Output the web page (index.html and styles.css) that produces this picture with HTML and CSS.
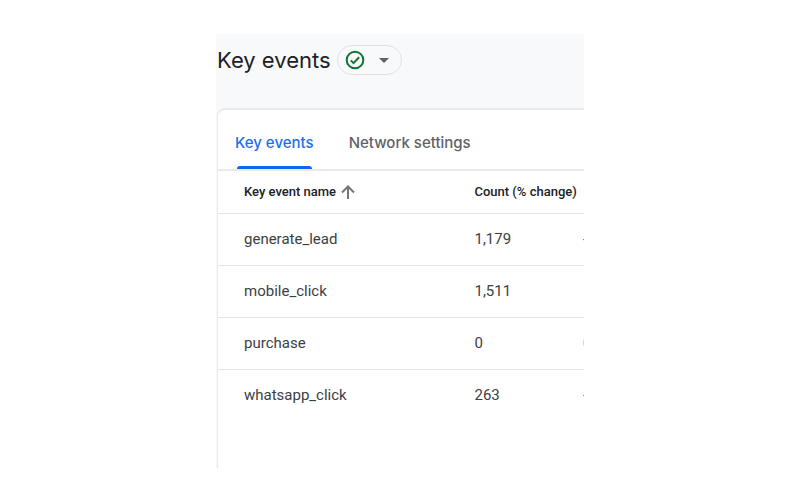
FILE: index.html
```html
<!DOCTYPE html>
<html lang="en">
<head>
    <meta charset="UTF-8">
    <meta name="viewport" content="width=device-width, initial-scale=1.0">
    <title>Key events</title>
    <link rel="stylesheet" href="styles.css">
</head>
<body>
    <main class="report">
        <header class="report-header">
            <h1>Key events</h1>
            <button type="button" class="status-button" aria-label="Data quality">
                <svg class="check-icon" viewBox="0 0 20 20" aria-hidden="true">
                    <circle cx="10" cy="10" r="8.3"/>
                    <path d="M5.8 10.4l2.7 2.7 5.6-5.9"/>
                </svg>
                <svg class="caret-icon" viewBox="0 0 10 5" aria-hidden="true">
                    <path d="M0 0h10L5 5z"/>
                </svg>
            </button>
        </header>

        <section class="card">
            <nav class="tabs">
                <a href="#events" class="tab active">Key events</a>
                <a href="#network" class="tab">Network settings</a>
            </nav>

            <table class="events" id="events">
                <thead>
                    <tr>
                        <th class="name" scope="col">
                            <span class="sort">Key event name
                                <svg class="sort-icon" viewBox="0 0 14 14" aria-hidden="true">
                                    <path d="M7 14V1.5M1 7.5l6-6 6 6"/>
                                </svg>
                            </span>
                        </th>
                        <th class="count" scope="col">Count (% change)</th>
                        <td class="change"></td>
                    </tr>
                </thead>
                <tbody>
                    <tr>
                        <td class="name">generate_lead</td>
                        <td class="count">1,179</td>
                        <td class="change down">-</td>
                    </tr>
                    <tr>
                        <td class="name">mobile_click</td>
                        <td class="count">1,511</td>
                        <td class="change"></td>
                    </tr>
                    <tr>
                        <td class="name">purchase</td>
                        <td class="count">0</td>
                        <td class="change">0</td>
                    </tr>
                    <tr>
                        <td class="name">whatsapp_click</td>
                        <td class="count">263</td>
                        <td class="change down">-</td>
                    </tr>
                </tbody>
            </table>
        </section>
    </main>
</body>
</html>
```
FILE: styles.css
```css
* {
    box-sizing: border-box;
}

body {
    margin: 0;
    background: #fff;
    color: #3c4043;
    font-family: Roboto, "Liberation Sans", sans-serif;
}

.report {
    width: 46%;
    margin: 34px auto;
    background: #f8f9fb;
    overflow: hidden;
}

.report-header {
    display: flex;
    align-items: center;
    gap: 6px;
    padding: 11px 1px 33px;
}

h1 {
    margin: 0;
    font-family: "Google Sans", Inter, sans-serif;
    font-size: 22px;
    font-weight: 400;
    line-height: 30px;
    color: #202124;
    white-space: nowrap;
}

.status-button {
    display: flex;
    align-items: center;
    gap: 14px;
    height: 30px;
    padding: 0 12px 0 7px;
    border: 1px solid #e0e2e6;
    border-radius: 15px;
    background: transparent;
    cursor: pointer;
}

.check-icon {
    width: 20px;
    height: 20px;
    fill: none;
    stroke: #137333;
    stroke-width: 2;
}

.caret-icon {
    width: 10px;
    height: 5px;
    fill: #5f6368;
}

.card {
    margin-left: 1px;
    padding-bottom: 47px;
    border: 2px solid #e8eaed;
    border-width: 2px 0 0 1px;
    border-radius: 8px 0 0 0;
    background: #fff;
}

/* Tabs */
.tabs {
    display: flex;
    gap: 35px;
    height: 61px;
    padding: 0 17px;
    border-bottom: 2px solid #e8eaed;
}

.tab {
    display: flex;
    flex-direction: column;
    padding-top: 23px;
    font-family: "Google Sans", Inter, sans-serif;
    font-size: 15px;
    font-weight: 500;
    line-height: 20px;
    color: #5f6368;
    text-decoration: none;
    white-space: nowrap;
}

.tab.active {
    color: #1a6ff0;
}

.tab.active::after {
    content: "";
    height: 3px;
    margin: auto 2px 0;
    border-radius: 3px 3px 0 0;
    background: #0b66f0;
}

/* Events table */
.events {
    width: 100%;
    border-collapse: collapse;
    table-layout: fixed;
}

.events th,
.events td {
    height: 52px;
    padding: 0;
    border-bottom: 1px solid #e4e6e9;
    font-size: 15px;
    text-align: left;
    white-space: nowrap;
    overflow: hidden;
}

.events thead th,
.events thead td {
    height: 42px;
    font-size: 13px;
    font-weight: 500;
    color: #202124;
}

.events tbody tr:last-child td {
    border-bottom: none;
}

.events .name {
    width: 70%;
    padding-left: 26px;
}

.events .count {
    width: 30%;
    padding-left: 1px;
}

.events .change {
    width: 1px;
}

.events .down {
    color: #d93025;
}

.sort {
    display: flex;
    align-items: center;
    gap: 5px;
}

.sort-icon {
    width: 14px;
    height: 14px;
    fill: none;
    stroke: #757575;
    stroke-width: 2;
}
```
